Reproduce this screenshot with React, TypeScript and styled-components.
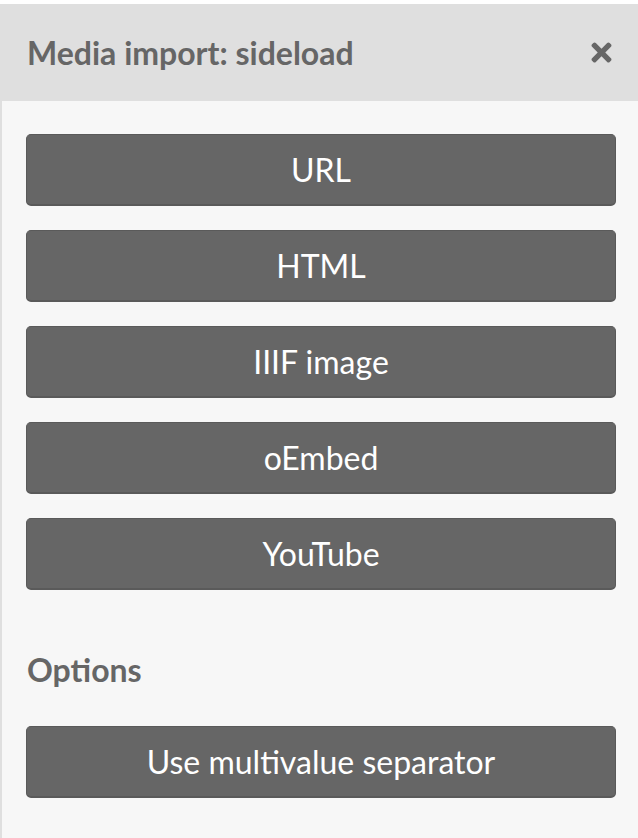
import React from "react";
import styled, { createGlobalStyle } from "styled-components";
import { FaTimes } from "react-icons/fa";

const GlobalStyle = createGlobalStyle`
  html, body {
    margin: 0;
    padding: 0;
    background: #ffffff;
    font-family: Lato, "Open Sans", "Liberation Sans", sans-serif;
  }
`;

const Sidebar = styled.aside`
  margin-top: 4px;
  width: 638px;
  height: 834px;
  display: flex;
  flex-direction: column;
  background-color: #f7f7f7;
  border-left: 2px solid #dfdfdf;
  box-sizing: border-box;
`;

const Header = styled.header`
  height: 97px;
  margin-left: -2px;
  display: flex;
  align-items: center;
  justify-content: space-between;
  padding: 0 22px 0 27px;
  background-color: #dfdfdf;
  color: #666666;
`;

const Title = styled.h2`
  margin: 0;
  font-size: 32px;
  font-weight: 700;
`;

const CloseButton = styled.button`
  border: 0;
  background: none;
  padding: 0;
  color: #666666;
  display: flex;
  cursor: pointer;
  font-size: 29px;
`;

const Body = styled.div`
  display: flex;
  flex-direction: column;
  padding: 33px 22px 0 24px;
`;

const ButtonList = styled.div`
  display: flex;
  flex-direction: column;
  gap: 24px;
`;

const ActionButton = styled.button`
  height: 72px;
  width: 100%;
  border: 1px solid #5a5a5a;
  border-bottom-width: 2px;
  border-radius: 5px;
  background-color: #666666;
  color: #ffffff;
  font-family: Lato, "Open Sans", "Liberation Sans", sans-serif;
  font-size: 32px;
  font-weight: 400;
  cursor: pointer;
`;

const SectionTitle = styled.h3`
  box-sizing: border-box;
  margin: 56px 0 0 1px;
  height: 56px;
  padding-bottom: 10px;
  display: flex;
  align-items: center;
  font-size: 32px;
  font-weight: 700;
  color: #666666;
`;

const OptionsList = styled.div`
  margin-top: 24px;
`;

const sources = ["URL", "HTML", "IIIF image", "oEmbed", "YouTube"];

export default function App() {
  return (
    <>
      <GlobalStyle />
      <Sidebar>
        <Header>
          <Title>Media import: sideload</Title>
          <CloseButton aria-label="Close">
            <FaTimes />
          </CloseButton>
        </Header>
        <Body>
          <ButtonList>
            {sources.map((s) => (
              <ActionButton key={s}>{s}</ActionButton>
            ))}
          </ButtonList>
          <SectionTitle>Options</SectionTitle>
          <OptionsList>
            <ActionButton>Use multivalue separator</ActionButton>
          </OptionsList>
        </Body>
      </Sidebar>
    </>
  );
}
